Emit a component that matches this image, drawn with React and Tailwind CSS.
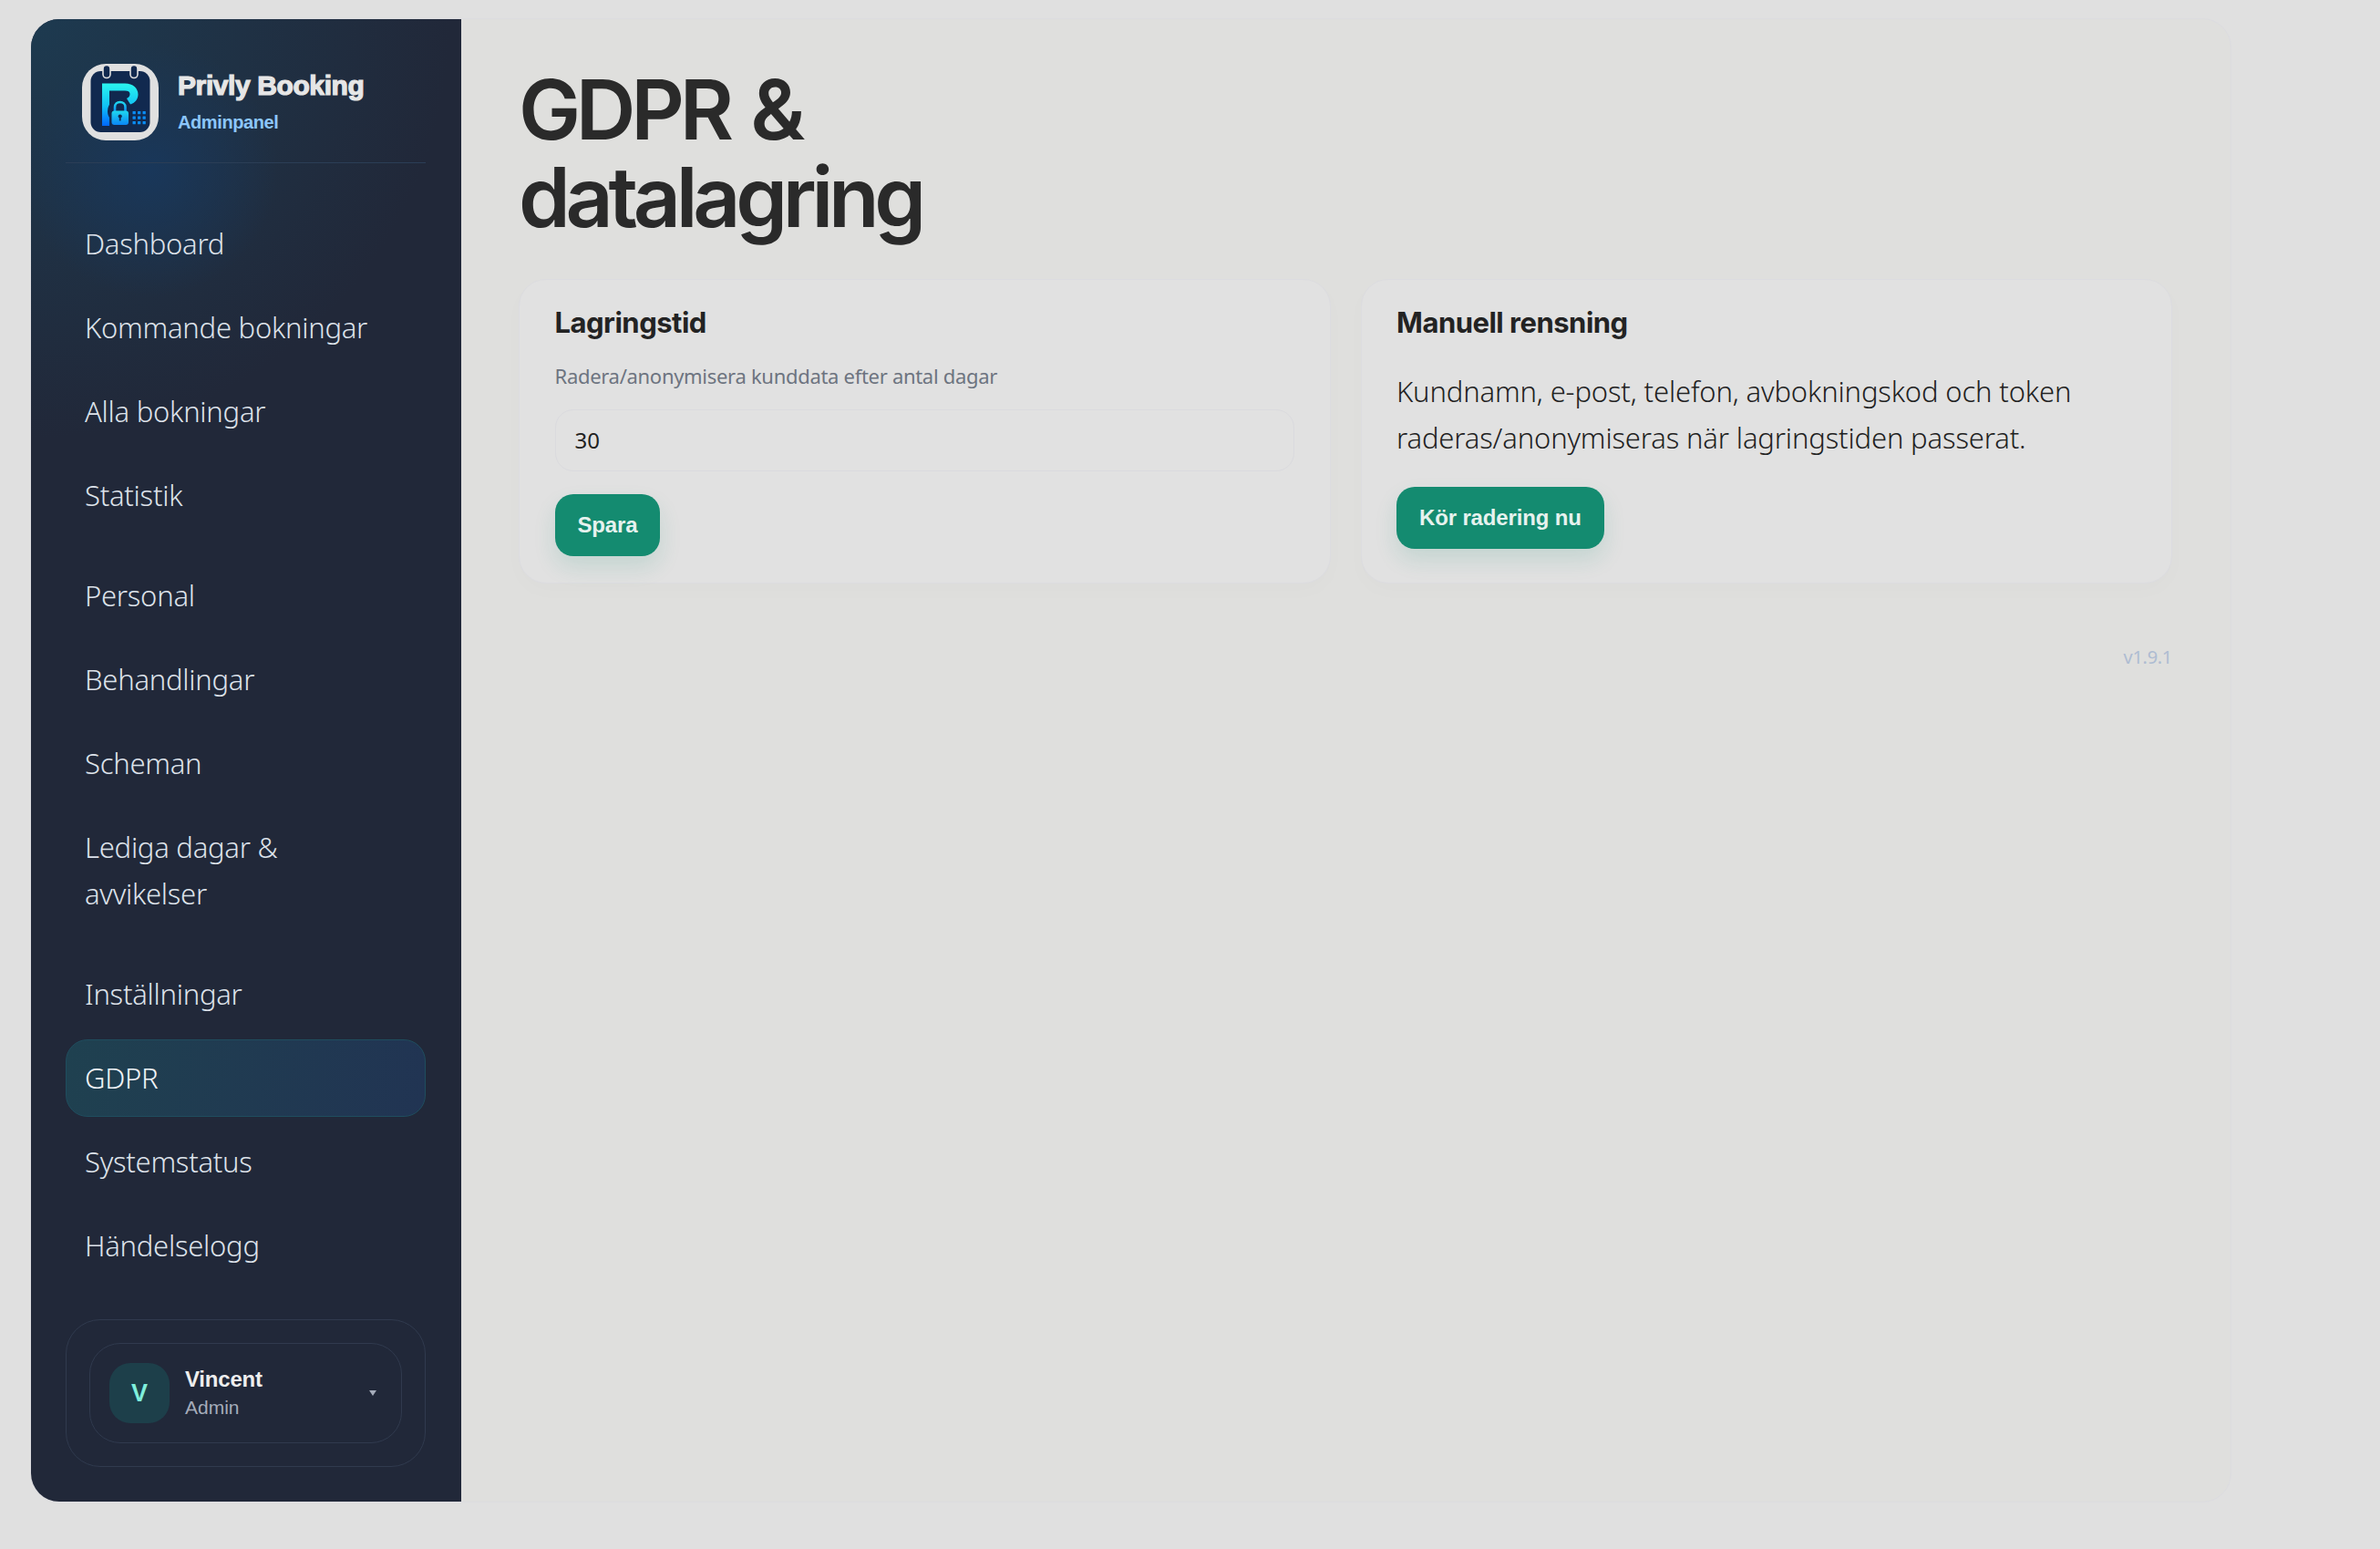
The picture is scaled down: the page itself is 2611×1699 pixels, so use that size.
import React from 'react';

const sans = "font-['Noto_Sans',sans-serif]";
const arial = "font-['Liberation_Sans',sans-serif]";

const navGroups = [
  ['Dashboard', 'Kommande bokningar', 'Alla bokningar', 'Statistik'],
  ['Personal', 'Behandlingar', 'Scheman', 'Lediga dagar & avvikelser'],
  ['Inställningar', 'GDPR', 'Systemstatus', 'Händelselogg'],
];

function Logo() {
  return (
    <svg viewBox="0 0 84 84" className="w-[84px] h-[84px] shrink-0">
      <defs>
        <linearGradient id="pGrad" x1="0" y1="0" x2="0" y2="1">
          <stop offset="0" stopColor="#2af5ee" />
          <stop offset="0.55" stopColor="#10c0f5" />
          <stop offset="1" stopColor="#0066ff" />
        </linearGradient>
        <linearGradient id="lockGrad" x1="0" y1="0" x2="0" y2="1">
          <stop offset="0" stopColor="#1fd8ee" />
          <stop offset="1" stopColor="#0a86f5" />
        </linearGradient>
      </defs>
      <rect width="84" height="84" rx="26" fill="#e0e0e0" />
      <rect x="9.5" y="8" width="65" height="67" rx="11" fill="#11294f" />
      <rect x="23" y="1.5" width="8" height="14" rx="4" fill="#11294f" stroke="#e0e0e0" strokeWidth="1.6" />
      <rect x="53" y="1.5" width="8" height="14" rx="4" fill="#11294f" stroke="#e0e0e0" strokeWidth="1.6" />
      <path d="M22 21.5H47C56 21.5 61.5 27 61.5 33.5C61.5 39 58 43 53 44.5L49 38C51.5 37 52.5 35 52.5 33C52.5 30.5 50.5 29.5 47 29.5H30V68H22Z" fill="url(#pGrad)" />
      <circle cx="41.5" cy="52" r="13.5" fill="#11294f" />
      <path d="M36 53V47.5C36 44 38.5 42 41.7 42C44.9 42 47.5 44 47.5 47.5V53" fill="none" stroke="url(#lockGrad)" strokeWidth="2.6" />
      <rect x="32.5" y="51.5" width="18.5" height="15.5" rx="3" fill="url(#lockGrad)" />
      <circle cx="41.7" cy="57.5" r="2.1" fill="#11294f" />
      <rect x="40.8" y="58" width="1.8" height="4.5" fill="#11294f" />
      {[52, 57.5, 63].map((y) =>
        [55.5, 61, 66.5].map((x) => (
          <rect key={`${x}-${y}`} x={x} y={y} width="3.3" height="3.3" rx="0.5" fill="#0a8cf5" />
        ))
      )}
    </svg>
  );
}

function NavItem({ label }) {
  const active = label === 'GDPR';
  return (
    <div
      className={`px-[20px] py-[16px] text-[31px] leading-[51px] font-[350] tracking-[-0.25px] rounded-[24px] border w-full ${
        active
          ? 'text-[#f0f3f7] border-[#1f4d5e] bg-[linear-gradient(100deg,#1f4150,#213453)]'
          : 'text-[#dde2ea] border-transparent'
      }`}
    >
      {label === 'Lediga dagar & avvikelser' ? (
        <>
          Lediga dagar &amp;
          <br />
          avvikelser
        </>
      ) : (
        label
      )}
    </div>
  );
}

function Sidebar() {
  return (
    <aside className="w-[472px] shrink-0 flex flex-col pl-[38px] pr-[39px] pt-[41px] bg-[#212839] bg-[radial-gradient(circle_140px_at_130px_165px,#19375a_0%,transparent_100%),radial-gradient(circle_460px_at_0px_0px,#1d3a50_0%,transparent_100%)]">
      <div className="flex items-center gap-[21px] h-[117px] pb-[17px] pl-[18px] border-b border-[#2b3e56]">
        <Logo />
        <div className={`${arial} pt-[2px]`}>
          <div className="text-[30px] leading-[36px] font-black tracking-[-0.4px] text-[#e6e6e6] [-webkit-text-stroke:1.2px_#e6e6e6]">Privly Booking</div>
          <div className="text-[20px] leading-[30px] mt-[7px] font-bold tracking-[-0.4px] text-[#8cc6fb]">Adminpanel</div>
        </div>
      </div>
      <nav className={`${sans} mt-[46px] flex flex-col gap-[25px]`}>
        {navGroups.map((group) => (
          <div key={group[0]} className="flex flex-col gap-[7px]">
            {group.map((label) => (
              <NavItem key={label} label={label} />
            ))}
          </div>
        ))}
      </nav>
      <div className="mt-auto mb-[38px] border border-[#303a4e] rounded-[38px] px-[25px] py-[25px]">
        <div className="flex items-center h-[110px] pl-[21px] pr-[27px] border border-[#303a4e] rounded-[34px]">
          <div className={`${arial} w-[66px] h-[66px] rounded-[23px] bg-[#1d3f4a] flex items-center justify-center text-[27px] font-bold text-[#7fefdc]`}>
            V
          </div>
          <div className={`${arial} ml-[17px] flex-1`}>
            <div className="text-[24px] leading-[30px] font-bold tracking-[-0.2px] text-[#eeeeee]">Vincent</div>
            <div className="text-[21px] leading-[28px] mt-[2px] text-[#a5acba]">Admin</div>
          </div>
          <svg viewBox="0 0 8 6" className="w-[8px] h-[6px]">
            <path d="M0 0H8L4 6Z" fill="#a5acba" />
          </svg>
        </div>
      </div>
    </aside>
  );
}

function Card({ title, children }) {
  return (
    <section className="rounded-[30px] border border-[#dcdce0] bg-[#e1e1e1] px-[38.5px] pt-[27px] h-[334px] shadow-[0_8px_24px_rgba(0,0,0,0.015)]">
      <h2 className="font-['Inter',sans-serif] text-[31px] leading-[40px] font-bold tracking-[-0.5px] text-[#232323]">{title}</h2>
      {children}
    </section>
  );
}

function Button({ children, className }) {
  return (
    <button className={`${arial} ${className} block h-[68px] px-[25px] rounded-[20px] bg-[#148b70] text-[24px] font-bold tracking-[-0.15px] text-[#e6f2ee] shadow-[0_12px_24px_rgba(20,139,112,0.14)]`}>
      {children}
    </button>
  );
}

export default function App() {
  return (
    <div className="min-h-screen bg-[#e0e0e0] pt-[20px] pl-[33px]">
      <div className="w-[2415px] h-[1628px] flex overflow-hidden rounded-[32px] border border-[#dcdce0] bg-[#dfdfdd]">
        <Sidebar />
        <main className="flex-1 pl-[63px] pr-[64px] pt-[51px]">
          <h1 className="font-['Inter',sans-serif] text-[91px] leading-[96px] font-semibold tracking-[-5.3px] [word-spacing:6px] text-[#2a2a2a]">
            GDPR &amp;
            <br />
            datalagring
          </h1>
          <div className="grid grid-cols-2 gap-[33px] mt-[42px]">
            <Card title="Lagringstid">
              <label className={`${sans} block mt-[21px] text-[22px] leading-[34px] tracking-[-0.3px] text-[#6d7480]`}>
                Radera/anonymisera kunddata efter antal dagar
              </label>
              <div className={`${sans} mt-[20px] h-[68px] rounded-[20px] border border-[#dadade] flex items-center px-[21px] text-[24px] text-[#222222]`}>
                30
              </div>
              <Button className="mt-[25px]">Spara</Button>
            </Card>
            <Card title="Manuell rensning">
              <p className={`${sans} mt-[30px] text-[31px] leading-[51px] font-[350] tracking-[-0.15px] text-[#222222]`}>
                Kundnamn, e-post, telefon, avbokningskod och token raderas/anonymiseras när lagringstiden passerat.
              </p>
              <Button className="mt-[28px]">Kör radering nu</Button>
            </Card>
          </div>
          <div className={`${sans} mt-[66px] text-right text-[20px] leading-[30px] tracking-[-0.3px] text-[#aebcd2]`}>v1.9.1</div>
        </main>
      </div>
    </div>
  );
}
